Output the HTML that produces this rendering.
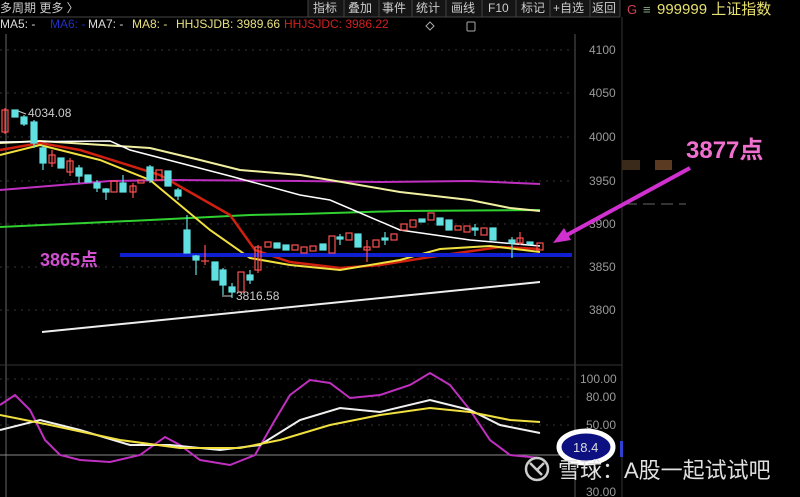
<!DOCTYPE html><html><head><meta charset="utf-8"><style>
body{margin:0;background:#000;width:800px;height:497px;overflow:hidden;font-family:"Liberation Sans","Noto Sans CJK SC",sans-serif}
</style></head><body>
<svg width="800" height="497" xmlns="http://www.w3.org/2000/svg" style="position:absolute;left:0;top:0">
<rect width="800" height="497" fill="#000"/>
<!-- header -->
<rect x="308" y="0" width="312" height="17" fill="#151515"/>
<g stroke="#444"><line x1="308" y1="0" x2="308" y2="17"/><line x1="344" y1="0" x2="344" y2="17"/><line x1="379" y1="0" x2="379" y2="17"/><line x1="412" y1="0" x2="412" y2="17"/><line x1="446" y1="0" x2="446" y2="17"/><line x1="482" y1="0" x2="482" y2="17"/><line x1="516" y1="0" x2="516" y2="17"/><line x1="550" y1="0" x2="550" y2="17"/><line x1="590" y1="0" x2="590" y2="17"/><line x1="620" y1="0" x2="620" y2="17"/><line x1="0" y1="17" x2="620" y2="17"/></g>
<g font-size="12" fill="#ccc">
<text x="0" y="12">多周期  更多 〉</text>
<text x="313" y="12">指标</text><text x="348" y="12">叠加</text><text x="382" y="12">事件</text><text x="416" y="12">统计</text><text x="451" y="12">画线</text><text x="488" y="12">F10</text><text x="521" y="12">标记</text><text x="553" y="12">+自选</text><text x="592" y="12">返回</text>
</g>
<text x="627" y="14" font-size="13" fill="#d04050">G</text>
<text x="643" y="14" font-size="13" fill="#8a8">≡</text>
<text x="657" y="14" font-size="15" fill="#e8e070">999999 上证指数</text>
<g font-size="12">
<text x="0" y="28" fill="#ddd">MA5: -</text><text x="50" y="28" fill="#2030c0">MA6: -</text>
<text x="88" y="28" fill="#ddd">MA7: -</text><text x="132" y="28" fill="#e8e080">MA8: -</text>
<text x="176" y="28" fill="#e8e080">HHJSJDB: 3989.66</text><text x="284" y="28" fill="#d02020">HHJSJDC: 3986.22</text>
</g>
<text x="139" y="28" font-size="8" fill="#ccc"> </text>
<rect x="467" y="22" width="8" height="9" fill="none" stroke="#aaa" rx="1"/><path d="M430 22 l4 4 -4 4 -4 -4z" fill="none" stroke="#aaa"/>
<!-- axes -->
<line x1="6" y1="34" x2="6" y2="497" stroke="#666"/>
<line x1="575" y1="34" x2="575" y2="497" stroke="#555"/>
<line x1="622" y1="17" x2="622" y2="497" stroke="#333"/>
<line x1="0" y1="365" x2="622" y2="365" stroke="#333"/>
<g stroke="#333" stroke-dasharray="2,5">
<line x1="0" y1="50" x2="575" y2="50"/><line x1="0" y1="93" x2="575" y2="93"/><line x1="0" y1="137" x2="575" y2="137"/><line x1="0" y1="181" x2="575" y2="181"/><line x1="0" y1="224" x2="575" y2="224"/><line x1="0" y1="267" x2="575" y2="267"/><line x1="0" y1="310" x2="575" y2="310"/>
<line x1="0" y1="379" x2="575" y2="379"/><line x1="0" y1="397" x2="575" y2="397"/><line x1="0" y1="425" x2="575" y2="425"/>
</g>
<line x1="0" y1="455" x2="575" y2="455" stroke="#888"/>
<g font-size="12" fill="#999">
<text x="589" y="54">4100</text><text x="589" y="97">4050</text><text x="589" y="141">4000</text><text x="589" y="185">3950</text><text x="589" y="228">3900</text><text x="589" y="271">3850</text><text x="589" y="314">3800</text>
<text x="580" y="383">100.00</text><text x="586" y="401">80.00</text><text x="586" y="429">50.00</text><text x="586" y="496">30.00</text>
</g>
<!-- right panel -->
<rect x="622" y="160" width="18" height="10" fill="#3a2a1a"/><rect x="655" y="160" width="17" height="10" fill="#5a3a20"/>
<line x1="625" y1="204" x2="686" y2="204" stroke="#666" stroke-dasharray="12,6"/>
<!-- MAs -->
<g fill="none" stroke-width="2">
<polyline stroke="#c030c0" points="0,190 110,181 170,180 300,181 380,182 470,181 540,184"/>
<polyline stroke="#30d030" points="0,227 150,220 250,215 300,214 400,211 540,210"/>
<polyline stroke="#f0f0a0" points="0,143 40,141 150,148 200,160 240,170 300,175 330,180 400,192 470,200 510,208 540,211"/>
<polyline stroke="#ffffff" stroke-width="1.5" points="0,142 110,141 130,150 230,176 300,195 330,200 400,230 470,240 540,246"/>
<polyline stroke="#d02010" stroke-width="2.5" points="0,150 40,143 80,150 160,175 230,215 255,250 290,262 340,268 380,265 430,257 500,247 540,249"/>
<polyline stroke="#f0e040" points="0,155 40,145 100,160 150,180 210,230 250,258 290,265 340,270 400,260 440,249 490,246 540,252"/>
<polyline stroke="#eee" points="42,332 540,282"/>
</g>
<rect x="120" y="253" width="452" height="4" fill="#1020d0"/>
<!-- candles -->
<g stroke-width="1.2">
<g stroke="#ff5050" fill="none">
<line x1="5" y1="108" x2="5" y2="134"/><rect x="2" y="110" width="6" height="22"/>
<line x1="52" y1="150" x2="52" y2="167"/><rect x="49" y="155" width="6" height="8"/>
<line x1="70" y1="158" x2="70" y2="176"/><rect x="67" y="161" width="6" height="11"/>
<rect x="111" y="181" width="6" height="11"/><line x1="133" y1="183" x2="133" y2="198"/><rect x="130" y="186" width="6" height="6"/>
<rect x="138" y="180" width="6" height="3"/><rect x="156" y="170" width="6" height="10"/>
<line x1="205" y1="245" x2="205" y2="265"/><line x1="201" y1="261" x2="209" y2="261"/>
<rect x="238" y="272" width="6" height="20"/><line x1="258" y1="245" x2="258" y2="273"/><rect x="255" y="247" width="6" height="23"/>
<rect x="265" y="242" width="6" height="5"/><rect x="292" y="245" width="6" height="5"/><rect x="301" y="247" width="6" height="6"/><rect x="310" y="246" width="6" height="5"/>
<rect x="329" y="236" width="6" height="17"/><rect x="346" y="233" width="6" height="7"/><line x1="367" y1="240" x2="367" y2="262"/><rect x="364" y="247" width="6" height="3"/>
<rect x="373" y="240" width="6" height="7"/><rect x="391" y="234" width="6" height="6"/><rect x="401" y="224" width="6" height="6"/><rect x="410" y="220" width="6" height="7"/>
<rect x="428" y="213" width="6" height="7"/><rect x="455" y="226" width="6" height="4"/><rect x="464" y="226" width="6" height="6"/><rect x="481" y="228" width="6" height="7"/>
<line x1="520" y1="232" x2="520" y2="245"/><rect x="517" y="238" width="6" height="5"/><rect x="537" y="243" width="6" height="7"/>
</g>
<g stroke="#60e0e0" fill="#60e0e0">
<rect x="12" y="110" width="6" height="7"/><line x1="24" y1="115" x2="24" y2="126"/><rect x="21" y="117" width="6" height="7"/>
<line x1="34" y1="120" x2="34" y2="148"/><rect x="31" y="122" width="6" height="21"/><line x1="43" y1="145" x2="43" y2="170"/><rect x="40" y="148" width="6" height="15"/>
<rect x="58" y="158" width="6" height="10"/><line x1="79" y1="165" x2="79" y2="183"/><rect x="76" y="168" width="6" height="8"/><rect x="85" y="175" width="6" height="7"/>
<line x1="97" y1="180" x2="97" y2="192"/><rect x="94" y="183" width="6" height="5"/><line x1="106" y1="188" x2="106" y2="200"/><rect x="103" y="189" width="6" height="3"/>
<line x1="123" y1="175" x2="123" y2="192"/><rect x="120" y="183" width="6" height="9"/><line x1="150" y1="165" x2="150" y2="183"/><rect x="147" y="167" width="6" height="13"/>
<rect x="165" y="171" width="6" height="15"/><line x1="178" y1="188" x2="178" y2="200"/><rect x="175" y="190" width="6" height="6"/>
<line x1="187" y1="215" x2="187" y2="253"/><rect x="184" y="230" width="6" height="23"/><line x1="196" y1="255" x2="196" y2="275"/><rect x="193" y="256" width="6" height="4"/>
<rect x="212" y="262" width="6" height="18"/><line x1="223" y1="268" x2="223" y2="295"/><rect x="220" y="270" width="6" height="15"/><line x1="232" y1="283" x2="232" y2="298"/><rect x="229" y="287" width="6" height="5"/>
<line x1="250" y1="270" x2="250" y2="284"/><rect x="247" y="275" width="6" height="5"/><rect x="274" y="243" width="6" height="5"/><rect x="283" y="245" width="6" height="5"/>
<rect x="320" y="244" width="6" height="6"/><line x1="340" y1="234" x2="340" y2="245"/><rect x="337" y="237" width="6" height="2"/><rect x="355" y="234" width="6" height="13"/>
<line x1="385" y1="232" x2="385" y2="245"/><rect x="382" y="238" width="6" height="2"/><rect x="419" y="219" width="6" height="3"/><rect x="437" y="218" width="6" height="7"/><rect x="446" y="220" width="6" height="10"/>
<line x1="475" y1="224" x2="475" y2="236"/><rect x="472" y="228" width="6" height="2"/><rect x="490" y="228" width="6" height="12"/><line x1="512" y1="237" x2="512" y2="258"/><rect x="509" y="240" width="6" height="3"/><rect x="527" y="242" width="6" height="2"/>
</g></g>
<g font-size="12" fill="#ccc"><text x="28" y="117">4034.08</text><text x="236" y="300">3816.58</text></g>
<path d="M18 111 l8 3 M222 296 h10" stroke="#ccc" fill="none"/>
<text x="40" y="266" font-size="18" font-weight="bold" fill="#d050d0">3865点</text>
<text x="686" y="158" font-size="24" font-weight="bold" fill="#f070d0">3877点</text>
<line x1="690" y1="168" x2="565" y2="236" stroke="#d030d0" stroke-width="4"/>
<path d="M553 243 l18 -3 l-7 -12z" fill="#d030d0"/>
<!-- lower indicators -->
<g fill="none" stroke-width="2">
<polyline stroke="#c030c0" points="0,405 15,395 30,410 45,440 60,455 80,460 110,462 140,455 165,437 180,445 200,460 230,465 255,455 275,420 290,395 310,380 330,383 350,398 380,395 410,385 430,373 450,385 470,410 490,440 510,455 540,458"/>
<polyline stroke="#f0f0f0" points="0,430 40,420 80,430 130,445 170,445 220,450 260,445 300,420 340,408 380,412 430,400 470,410 500,425 540,433"/>
<polyline stroke="#f0e040" points="0,415 50,425 120,440 180,448 240,448 280,440 330,425 380,415 430,408 470,412 510,420 540,422"/>
</g>
<ellipse cx="586" cy="447" rx="27" ry="16" fill="#0c1080" stroke="#fff" stroke-width="5"/>
<text x="573" y="452" font-size="13" fill="#ddd">18.4</text>
<rect x="620" y="441" width="3" height="16" fill="#3040d0"/>
<circle cx="537" cy="469" r="11" fill="none" stroke="#ccc" stroke-width="2.5"/>
<path d="M530 463 l12 12 M544 463 l-7 7" stroke="#ccc" stroke-width="2.5" fill="none"/>
<text x="558" y="478" font-size="22" fill="#e0e0e0">雪球：A股一起试试吧</text>
</svg>
</body></html>
